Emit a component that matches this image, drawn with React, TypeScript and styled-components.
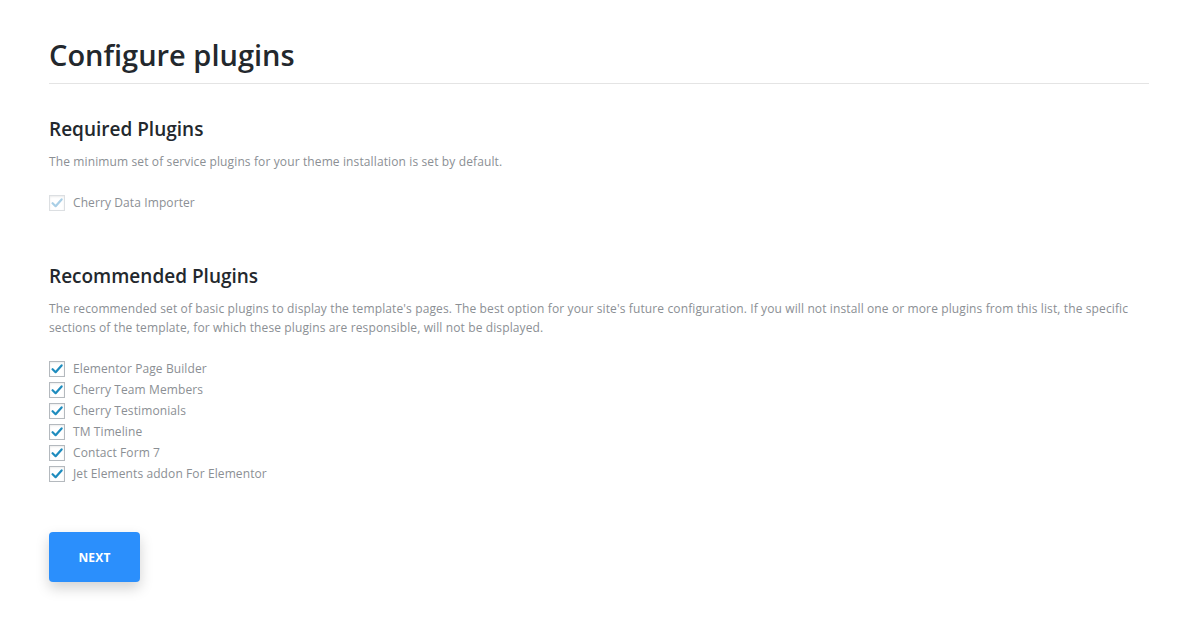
import React, { useState } from "react";
import styled, { createGlobalStyle } from "styled-components";

const GlobalStyle = createGlobalStyle`
  html, body {
    margin: 0;
    padding: 0;
    background: #ffffff;
  }
  body {
    font-family: "Open Sans", "Noto Sans", sans-serif;
    -webkit-font-smoothing: antialiased;
  }
`;

const requiredPlugins = ["Cherry Data Importer"];

const recommendedPlugins = [
  "Elementor Page Builder",
  "Cherry Team Members",
  "Cherry Testimonials",
  "TM Timeline",
  "Contact Form 7",
  "Jet Elements addon For Elementor",
];

const CheckMark = ({ disabled }: { disabled?: boolean }) => (
  <svg width="12" height="12" viewBox="0 0 12 12">
    <path
      d="M1.6 6.2 L4.6 9.2 L10.6 2.4"
      fill="none"
      stroke={disabled ? "#a9cfe6" : "#1e8cbe"}
      strokeWidth="2.2"
      strokeLinecap="round"
      strokeLinejoin="round"
    />
  </svg>
);

const App = () => {
  const [checked, setChecked] = useState<string[]>(recommendedPlugins);

  const toggle = (name: string) => {
    setChecked((prev) =>
      prev.includes(name) ? prev.filter((p) => p !== name) : [...prev, name]
    );
  };

  return (
    <>
      <GlobalStyle />
      <Page>
        <Title>Configure plugins</Title>

        <Section>
          <SectionTitle>Required Plugins</SectionTitle>
          <Description>
            The minimum set of service plugins for your theme installation is
            set by default.
          </Description>
          <PluginList>
            {requiredPlugins.map((name) => (
              <PluginRow key={name} disabled>
                <Box disabled>
                  <CheckMark disabled />
                </Box>
                {name}
              </PluginRow>
            ))}
          </PluginList>
        </Section>

        <Section spaced>
          <SectionTitle>Recommended Plugins</SectionTitle>
          <Description>
            The recommended set of basic plugins to display the template's
            pages. The best option for your site's future configuration. If you
            will not install one or more plugins from this list, the specific
            sections of the template, for which these plugins are responsible,
            will not be displayed.
          </Description>
          <PluginList>
            {recommendedPlugins.map((name) => (
              <PluginRow key={name} onClick={() => toggle(name)}>
                <Box>{checked.includes(name) && <CheckMark />}</Box>
                {name}
              </PluginRow>
            ))}
          </PluginList>
        </Section>

        <NextButton>NEXT</NextButton>
      </Page>
    </>
  );
};

export default App;

const Page = styled.div`
  padding: 33px 46px 40px 49px;
  display: flex;
  flex-direction: column;
  align-items: flex-start;
`;

const Title = styled.h1`
  align-self: stretch;
  margin: 0;
  padding-bottom: 6px;
  border-bottom: 1px solid #e4e4e4;
  font-size: 29px;
  font-weight: 600;
  line-height: 44px;
  color: #23282d;
`;

const Section = styled.div<{ spaced?: boolean }>`
  margin-top: ${(p) => (p.spaced ? "52px" : "32px")};
  align-self: stretch;
`;

const SectionTitle = styled.h2`
  margin: 0;
  font-size: 19px;
  font-weight: 600;
  line-height: 26px;
  color: #23282d;
`;

const Description = styled.p`
  margin: 10px 0 0;
  font-size: 12px;
  line-height: 19px;
  letter-spacing: 0.12px;
  color: #8b8f94;
`;

const PluginList = styled.div`
  margin-top: 24px;
  display: flex;
  flex-direction: column;
  gap: 5px;
`;

const PluginRow = styled.label<{ disabled?: boolean }>`
  display: flex;
  align-items: center;
  gap: 8px;
  font-size: 12px;
  line-height: 16px;
  letter-spacing: 0.1px;
  color: #8b8f94;
  cursor: ${(p) => (p.disabled ? "default" : "pointer")};
  user-select: none;
`;

const Box = styled.span<{ disabled?: boolean }>`
  width: 14px;
  height: 14px;
  display: flex;
  align-items: center;
  justify-content: center;
  border: 1px solid ${(p) => (p.disabled ? "#dcdfe2" : "#b4b9be")};
  background: #ffffff;
  box-shadow: inset 0 1px 2px rgba(0, 0, 0, 0.08);
`;

const NextButton = styled.button`
  margin-top: 50px;
  width: 91px;
  height: 50px;
  border: none;
  border-radius: 4px;
  background: #2b8ffc;
  color: #ffffff;
  font-family: "Open Sans", sans-serif;
  font-size: 12px;
  font-weight: 700;
  letter-spacing: 0.2px;
  cursor: pointer;
  box-shadow: 0 6px 14px rgba(0, 0, 0, 0.18);
`;
